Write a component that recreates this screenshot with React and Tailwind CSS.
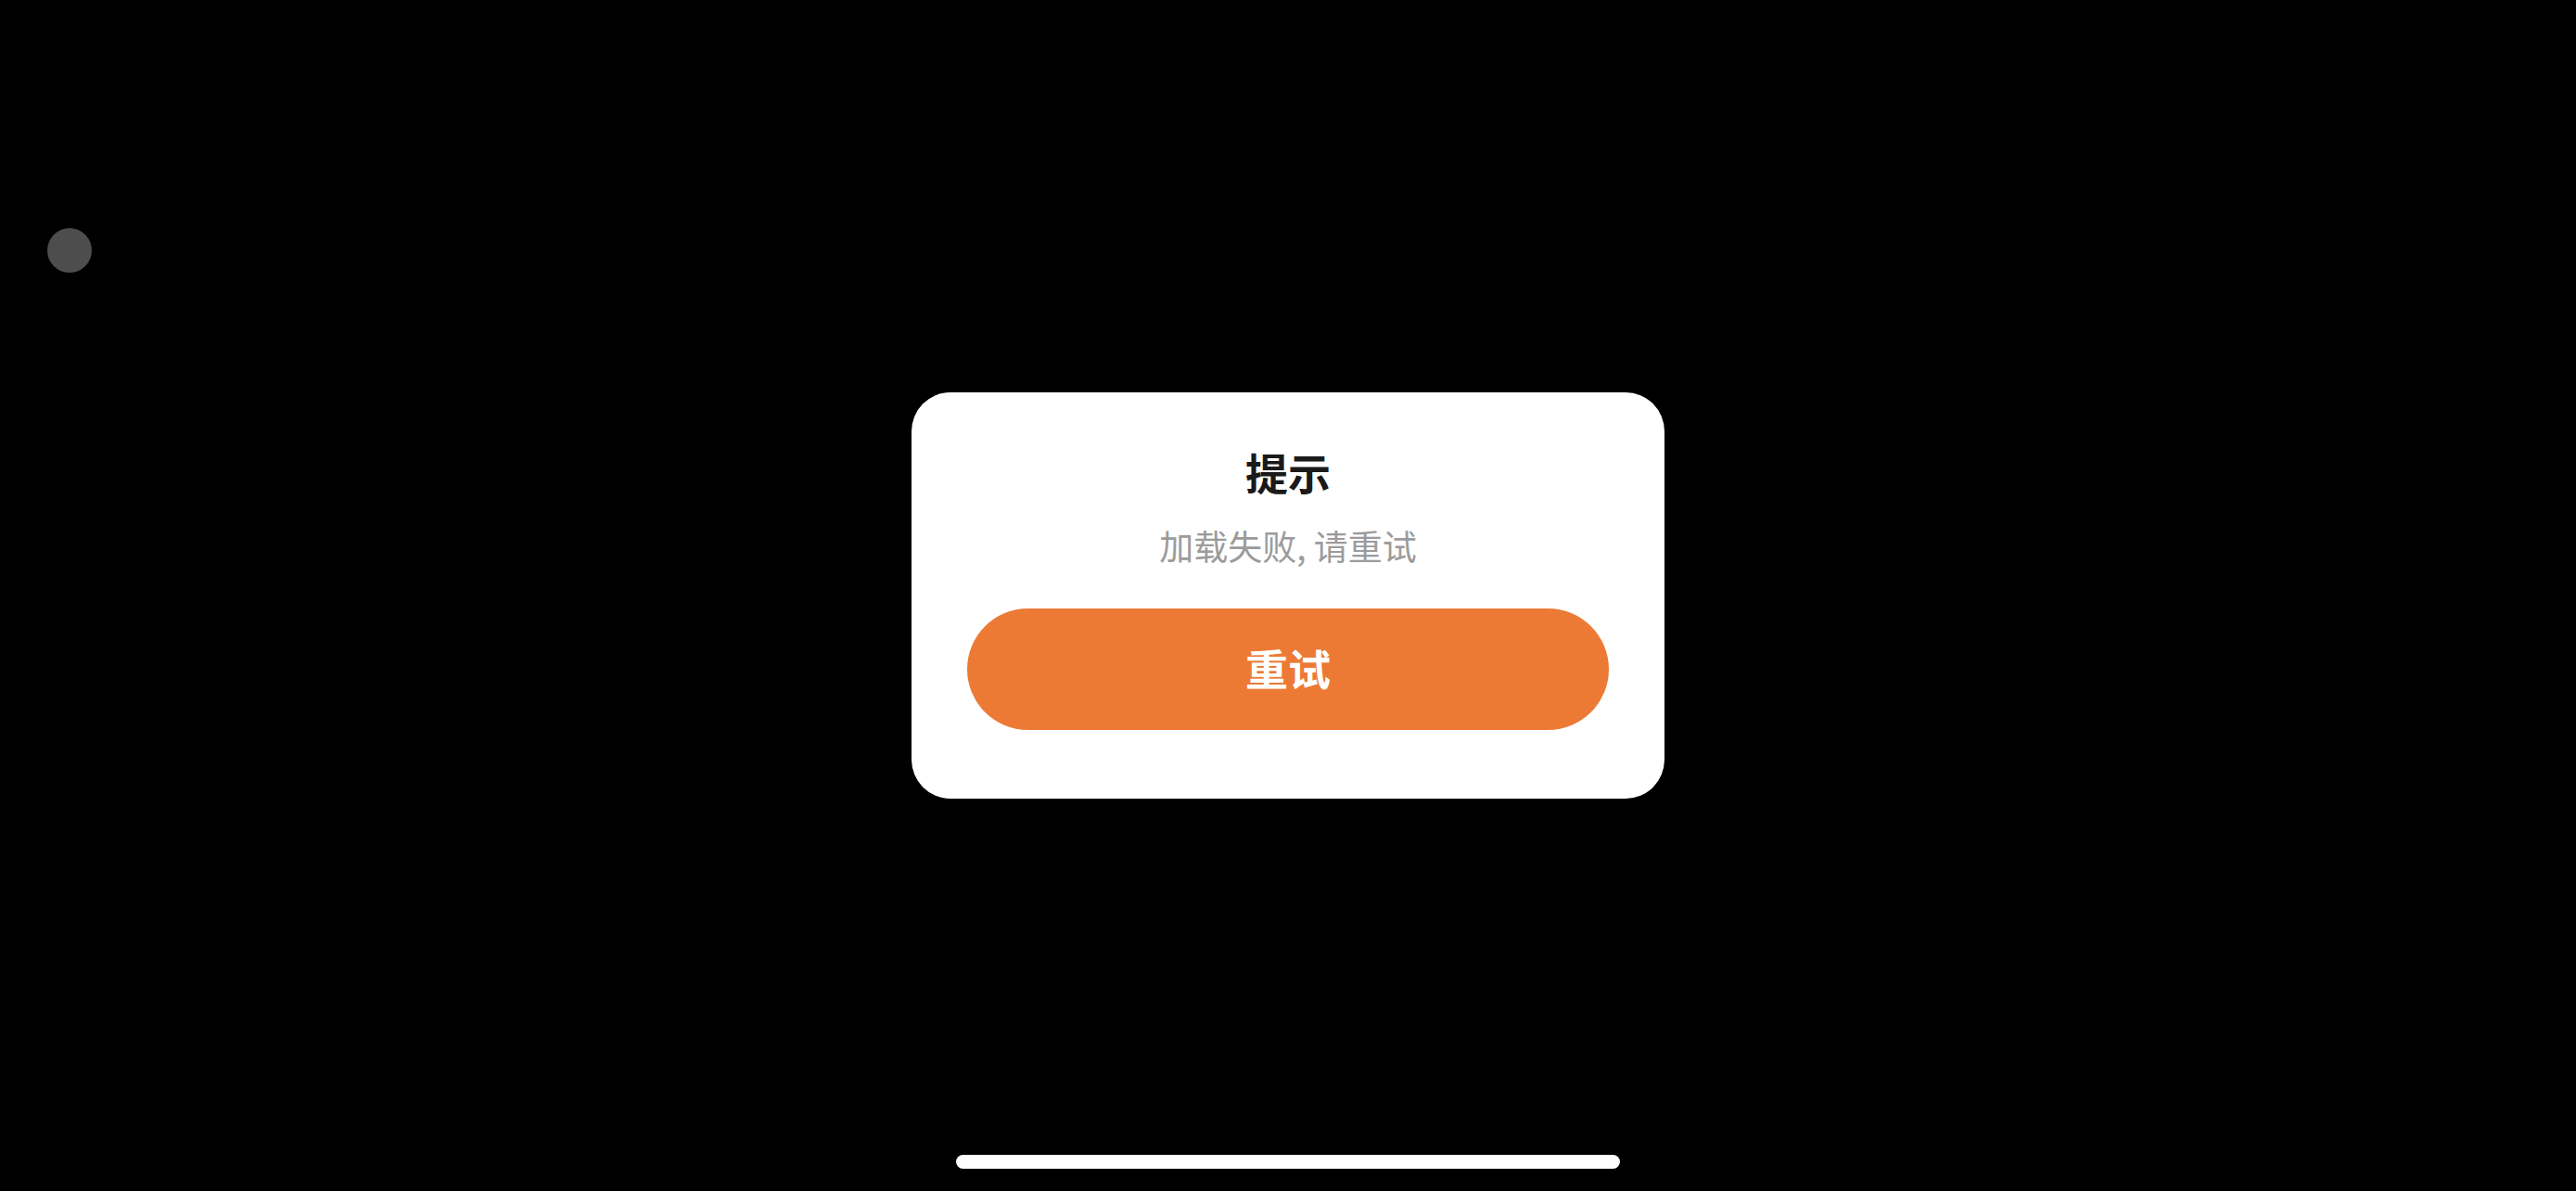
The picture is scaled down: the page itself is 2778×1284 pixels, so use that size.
const font = { fontFamily: '"Noto Sans CJK SC", "Noto Sans", sans-serif' }

const RetryDialog = ({ onRetry }) => {
  return (
    <div className="w-[812px] rounded-[42px] bg-white px-[60px] pt-[53px] pb-[74px] flex flex-col items-center">
      <h2 className="text-[46px] leading-[64px] font-bold text-[#1a1a1a]">提示</h2>
      <p className="mt-[24px] text-[37px] leading-[48px] text-[#9b9b9b]">加载失败, 请重试</p>
      <button
        onClick={onRetry}
        className="mt-[44px] w-full h-[131px] rounded-full bg-[#ec7a35] text-white text-[46px] font-bold pb-[5px] flex items-center justify-center"
      >
        重试
      </button>
    </div>
  )
}

const App = () => {
  return (
    <div className="relative w-full h-[1284px] bg-black flex items-center justify-center overflow-hidden" style={font}>
      {/* assistive touch dot */}
      <div className="absolute left-[51px] top-[246px] w-[48px] h-[48px] rounded-full bg-[#4d4d4d]" />

      <RetryDialog onRetry={() => {}} />

      {/* home indicator */}
      <div className="absolute left-[1031px] top-[1245px] w-[716px] h-[15px] rounded-full bg-white" />
    </div>
  )
}

export default App
